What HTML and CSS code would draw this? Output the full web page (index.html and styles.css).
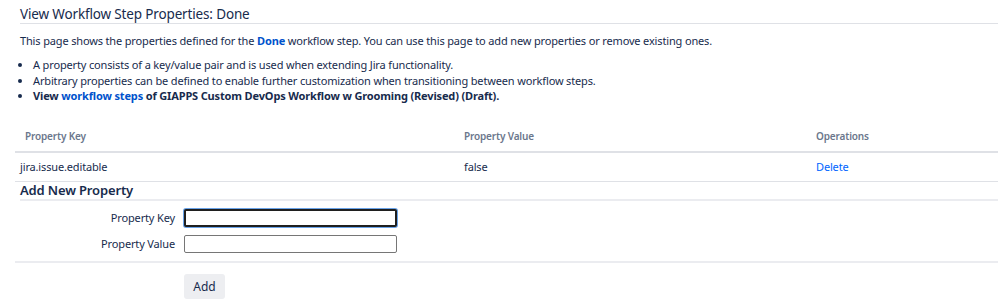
FILE: index.html
```html
<!DOCTYPE html>
<html>
    <head>
        <title>View Workflow Step Properties</title>
        <meta charset="UTF-8">
        <link rel="stylesheet" href="styles.css">
    </head>
    <body>
        <div class="page">
            <h2 class="page-title">View Workflow Step Properties: Done</h2>
            <p class="intro">This page shows the properties defined for the <a href="#" class="step-link">Done</a> workflow step. You can use this page to add new properties or remove existing ones.</p>
            <ul class="notes">
                <li>A property consists of a key/value pair and is used when extending Jira functionality.</li>
                <li>Arbitrary properties can be defined to enable further customization when transitioning between workflow steps.</li>
                <li class="notes-strong">View <a href="#">workflow steps</a> of GIAPPS Custom DevOps Workflow w Grooming (Revised) (Draft).</li>
            </ul>

            <table class="props">
                <thead>
                    <tr>
                        <th class="col-key">Property Key</th>
                        <th class="col-value">Property Value</th>
                        <th class="col-ops">Operations</th>
                    </tr>
                </thead>
                <tbody>
                    <tr>
                        <td>jira.issue.editable</td>
                        <td>false</td>
                        <td><a href="#" class="delete">Delete</a></td>
                    </tr>
                </tbody>
            </table>

            <form class="add-form">
                <h3 class="add-title">Add New Property</h3>
                <div class="field">
                    <label for="key">Property Key</label>
                    <input type="text" id="key" class="text-input is-focused">
                </div>
                <div class="field">
                    <label for="value">Property Value</label>
                    <input type="text" id="value" class="text-input">
                </div>
                <div class="buttons">
                    <button type="button" class="btn">Add</button>
                </div>
            </form>
        </div>
    </body>
</html>
```

FILE: styles.css
```css
* {
    margin: 0;
    padding: 0;
    box-sizing: border-box;
}
body {
    background-color: #ffffff;
    color: #172b4d;
    font-family: "Noto Sans", "Open Sans", sans-serif;
    font-size: 11px;
    letter-spacing: -0.15px;
}
a {
    color: #0052cc;
    text-decoration: none;
}
.page {
    padding-left: 15px;
}
.page-title {
    margin-left: 5px;
    padding-top: 5px;
    font-size: 13.5px;
    font-weight: normal;
    line-height: 18px;
    border-bottom: 1px solid #dfe1e6;
}
.intro {
    margin: 9px 0 0 5px;
    line-height: 16px;
}
.step-link {
    font-weight: bold;
}
.notes {
    margin: 8px 0 0 18px;
    line-height: 15.5px;
}
.notes-strong {
    font-weight: bold;
}
.props {
    width: 100%;
    margin-top: 17px;
    border-collapse: collapse;
}
.props th {
    text-align: left;
    font-weight: 600;
    font-size: 10px;
    color: #6b778c;
    line-height: 16px;
    padding: 7px 5px;
    border-bottom: 2px solid #dfe1e6;
}
.props th.col-key {
    padding-left: 10px;
    width: 444px;
}
.props th.col-value {
    width: 352px;
}
.props td {
    line-height: 16px;
    padding: 6px 5px;
    border-bottom: 1px solid #dfe1e6;
}
.props .delete {
    color: #0065ff;
}
.add-title {
    margin-left: 5px;
    font-size: 13px;
    font-weight: 600;
    line-height: 17px;
    border-bottom: 2px solid #ebecf0;
}
.field {
    display: grid;
    grid-template-columns: 160px 213px;
    column-gap: 9px;
    align-items: center;
    margin-top: 8px;
}
.field label {
    text-align: right;
    line-height: 16px;
}
.text-input {
    height: 18px;
    border: 1px solid #767676;
    border-radius: 2px;
    font-family: inherit;
    font-size: 11px;
    background-color: #ffffff;
}
.text-input.is-focused {
    border: 2px solid #1f1f1f;
    box-shadow: 0 0 0 1px #6aa3e8;
}
.buttons {
    margin-top: 8px;
    border-top: 2px solid #ebecf0;
    padding: 11px 0 0 169px;
}
.btn {
    width: 41px;
    height: 25px;
    border: none;
    border-radius: 3px;
    background-color: #edeef1;
    color: #172b4d;
    font-family: inherit;
    font-size: 12px;
}
```
